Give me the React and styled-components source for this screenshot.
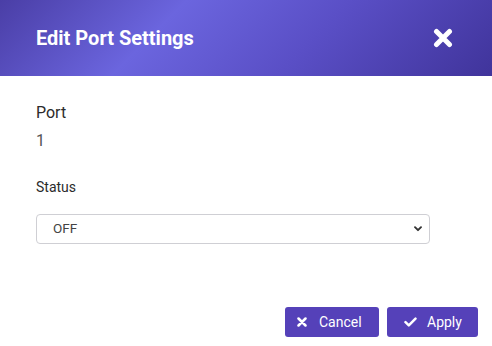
import React from "react";
import styled, { createGlobalStyle } from "styled-components";

const Global = createGlobalStyle`
  html, body { margin: 0; padding: 0; background: #fff; }
  body { font-family: Roboto, "Noto Sans", "Liberation Sans", sans-serif; }
  * { box-sizing: border-box; }
`;

const Modal = styled.div`
  width: 492px;
  height: 346px;
  background: #fff;
  display: flex;
  flex-direction: column;
`;

const Header = styled.header`
  height: 76px;
  flex: none;
  display: flex;
  align-items: center;
  justify-content: space-between;
  padding: 0 39px 0 36px;
  background: linear-gradient(135deg, #4a3ea6 0%, #6b65de 33%, #5a4fc6 62%, #40349b 100%);
`;

const Title = styled.h2`
  margin: 0;
  color: #fff;
  font-size: 20px;
  font-weight: 700;
  line-height: 23px;
`;

const CloseButton = styled.button`
  border: 0;
  padding: 0;
  background: none;
  width: 20px;
  height: 20px;
  display: flex;
  cursor: pointer;
`;

const Body = styled.div`
  flex: 1;
  display: flex;
  flex-direction: column;
  padding: 27px 62px 0 36px;
`;

const FieldLabel = styled.div`
  font-size: ${(p) => p.$size}px;
  font-weight: 400;
  color: #2b2b2b;
  line-height: ${(p) => Math.round(p.$size * 1.18)}px;
`;

const Value = styled.div`
  margin-top: 9px;
  font-size: 16px;
  color: #555;
  line-height: 19px;
`;

const StatusBlock = styled.div`
  margin-top: 29px;
  display: flex;
  flex-direction: column;
  gap: 18px;
`;

const SelectWrap = styled.div`
  position: relative;
  width: 394px;
`;

const Select = styled.select`
  appearance: none;
  -webkit-appearance: none;
  width: 100%;
  height: 30px;
  border: 1px solid #cfcfd4;
  border-radius: 4px;
  background: #fff;
  padding: 0 30px 2px 16px;
  font-family: Roboto, "Liberation Sans", sans-serif;
  font-size: 13.5px;
  color: #444;
  outline: none;
`;

const Chevron = styled.svg`
  position: absolute;
  right: 8px;
  top: 12px;
  pointer-events: none;
`;

const Footer = styled.footer`
  display: flex;
  justify-content: flex-end;
  gap: 8px;
  padding: 0 14px 9px 0;
`;

const Button = styled.button`
  height: 30px;
  width: ${(p) => p.$w}px;
  border: 0;
  border-radius: 3px;
  background: #5541b9;
  color: #fff;
  display: flex;
  align-items: center;
  padding: 0 0 0 ${(p) => p.$pl}px;
  gap: ${(p) => p.$gap}px;
  font-family: Roboto, "Liberation Sans", sans-serif;
  font-size: 14px;
  font-weight: 400;
  cursor: pointer;
`;

export default function App() {
  return (
    <>
      <Global />
      <Modal>
        <Header>
          <Title>Edit Port Settings</Title>
          <CloseButton aria-label="Close">
            <svg width="20" height="20" viewBox="0 0 20 20">
              <path d="M3.5 3.5 L16.5 16.5 M16.5 3.5 L3.5 16.5" stroke="#fff" strokeWidth="5" strokeLinecap="round" />
            </svg>
          </CloseButton>
        </Header>
        <Body>
          <FieldLabel $size={16}>Port</FieldLabel>
          <Value>1</Value>
          <StatusBlock>
            <FieldLabel $size={14}>Status</FieldLabel>
            <SelectWrap>
              <Select defaultValue="OFF">
                <option value="OFF">OFF</option>
                <option value="ON">ON</option>
              </Select>
              <Chevron width="8" height="6" viewBox="0 0 8 6">
                <path d="M1 1.2 L4 4.2 L7 1.2" fill="none" stroke="#333" strokeWidth="1.9" strokeLinecap="round" strokeLinejoin="round" />
              </Chevron>
            </SelectWrap>
          </StatusBlock>
        </Body>
        <Footer>
          <Button $w={94} $pl={12} $gap={12}>
            <svg width="10" height="10" viewBox="0 0 10 10">
              <path d="M1.5 1.5 L8.5 8.5 M8.5 1.5 L1.5 8.5" stroke="#fff" strokeWidth="2.5" strokeLinecap="round" />
            </svg>
            Cancel
          </Button>
          <Button $w={91} $pl={17} $gap={10}>
            <svg width="13" height="10" viewBox="0 0 13 10">
              <path d="M1.5 5.2 L4.8 8.4 L11.5 1.6" fill="none" stroke="#fff" strokeWidth="2.5" strokeLinecap="round" strokeLinejoin="round" />
            </svg>
            Apply
          </Button>
        </Footer>
      </Modal>
    </>
  );
}
